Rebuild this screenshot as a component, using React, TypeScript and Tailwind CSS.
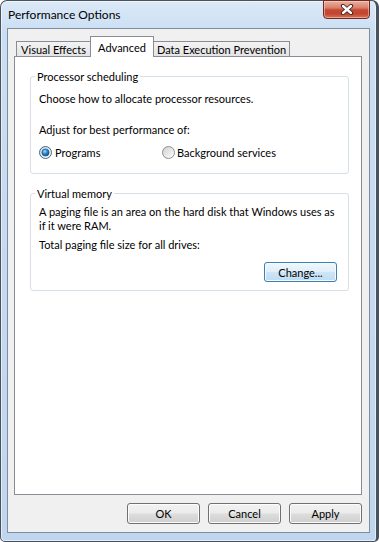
import React from "react";

function Radio({ checked }: { checked: boolean }) {
  return (
    <svg width="13" height="13" viewBox="0 0 13 13" className="shrink-0">
      <defs>
        <linearGradient id={checked ? "rgc" : "rgu"} x1="0" y1="0" x2="1" y2="1">
          <stop offset="0" stopColor="#cfcfcf" />
          <stop offset="1" stopColor="#ffffff" />
        </linearGradient>
        <radialGradient id="dot" cx="0.4" cy="0.35" r="0.7">
          <stop offset="0" stopColor="#9fd9ff" />
          <stop offset="0.45" stopColor="#2f8fd8" />
          <stop offset="1" stopColor="#0b3f73" />
        </radialGradient>
      </defs>
      <circle cx="6.5" cy="6.5" r="6" fill={`url(#${checked ? "rgc" : "rgu"})`} stroke={checked ? "#3b6c93" : "#8e8f8f"} strokeWidth="1" />
      {checked && <circle cx="6.5" cy="6.5" r="3.6" fill="url(#dot)" stroke="#1d4d78" strokeWidth="0.6" />}
    </svg>
  );
}

function Btn({ label, def }: { label: string; def?: boolean }) {
  return (
    <div
      className={
        def
          ? "w-[73px] h-[21px] flex items-center justify-center rounded-[3px] border border-[#3c7fb1] bg-[linear-gradient(to_bottom,#eef7fd_0%,#e0eff9_48%,#cde5f6_52%,#bfdcf1_100%)] shadow-[inset_0_0_0_1px_#f4fafe] text-[11px] leading-[15px] text-black"
          : "w-[73px] h-[21px] flex items-center justify-center rounded-[3px] border border-[#707070] bg-[linear-gradient(to_bottom,#f2f2f2_0%,#ebebeb_48%,#dddddd_52%,#cfcfcf_100%)] shadow-[inset_0_0_0_1px_#fcfcfc] text-[11px] leading-[15px] text-black"
      }
    >
      {label}
    </div>
  );
}

export default function App() {
  return (
    <div className="w-[379px] h-[542px] bg-white font-['Lato',sans-serif]">
      <div className="w-[379px] h-[542px] flex flex-col border-l border-t border-b border-r-[3px] border-[#4a525c] rounded-t-[7px] rounded-b-[5px] bg-[linear-gradient(to_bottom,#dbe9f7_0%,#cadef3_6%,#c0d6ef_100%)] shadow-[inset_0_0_0_1px_rgba(255,255,255,0.55)]">
        {/* Title bar */}
        <div className="h-[27px] flex justify-between">
          <div className="pl-[7px] pt-[6px] text-[12px] leading-[15px] text-black">Performance Options</div>
          <div className="mr-[6px] -mt-px w-[47px] h-[19px] flex items-center justify-center rounded-b-[4px] border border-[#6e2a20] bg-[linear-gradient(to_bottom,#eab1a3_0%,#d9806d_40%,#c44a34_52%,#c2452f_75%,#d9735a_100%)] shadow-[inset_0_0_0_1px_rgba(255,220,210,0.5)]">
            <svg width="14" height="11" viewBox="0 0 14 11">
              <path d="M3 2 L11 9 M11 2 L3 9" stroke="#3b1f1a" strokeWidth="4.2" strokeLinecap="round" />
              <path d="M3 2 L11 9 M11 2 L3 9" stroke="#ffffff" strokeWidth="2.4" strokeLinecap="round" />
            </svg>
          </div>
        </div>
        {/* Client area */}
        <div className="ml-[6px] w-[363px] h-[505px] border border-[#7f8d9c] bg-[#f0f0f0] flex flex-col text-[11px] leading-[15px] text-black">
          {/* Tabs */}
          <div className="mt-[7px] pl-[8px] h-[20px] flex items-end">
            <div className="w-[74px] h-[15px] border-l border-t border-[#898c95] bg-[linear-gradient(to_bottom,#f3f3f3,#e4e4e4)] flex items-center justify-center">
              Visual Effects
            </div>
            <div className="relative z-10 w-[64px] h-[21px] -mb-px border-l border-t border-r border-[#898c95] bg-white flex items-center justify-center">
              Advanced
            </div>
            <div className="w-[136px] h-[15px] border-t border-r border-[#898c95] bg-[linear-gradient(to_bottom,#f3f3f3,#e4e4e4)] flex items-center justify-center">
              Data Execution Prevention
            </div>
          </div>
          {/* Panel */}
          <div className="ml-[6px] w-[348px] h-[439px] border border-[#898c95] bg-white flex flex-col">
            <fieldset className="mt-[12px] ml-[15px] w-[319px] border border-[#d5dfe5] rounded-[3px] pl-[8px] pb-[13px]">
              <legend className="-ml-[4px] px-[2px] leading-[15px]">Processor scheduling</legend>
              <p className="mt-[7px]">Choose how to allocate processor resources.</p>
              <p className="mt-[16px]">Adjust for best performance of:</p>
              <div className="mt-[8px] h-[15px] flex items-center">
                <div className="w-[123px] flex items-center gap-[3px]">
                  <Radio checked />
                  <span>Programs</span>
                </div>
                <div className="flex items-center gap-[2px]">
                  <Radio checked={false} />
                  <span>Background services</span>
                </div>
              </div>
            </fieldset>
            <fieldset className="mt-[12px] ml-[15px] w-[319px] border border-[#d5dfe5] rounded-[3px] pl-[8px] pb-[8px]">
              <legend className="-ml-[4px] px-[2px] leading-[15px]">Virtual memory</legend>
              <p className="mt-[4px] leading-[14px]">
                A paging file is an area on the hard disk that Windows uses as
                <br />
                if it were RAM.
              </p>
              <p className="mt-[4px]">Total paging file size for all drives:</p>
              <div className="mt-[10px] pr-[11px] flex justify-end">
                <div className="w-[73px] h-[20px] flex items-center justify-center rounded-[3px] border border-[#3c7fb1] bg-[linear-gradient(to_bottom,#eef7fd_0%,#e0eff9_48%,#cde5f6_52%,#bfdcf1_100%)] shadow-[inset_0_0_0_1px_#f4fafe]">
                  Change...
                </div>
              </div>
            </fieldset>
          </div>
          {/* Buttons */}
          <div className="mt-[8px] pr-[7px] flex justify-end gap-[8px]">
            <Btn label="OK" />
            <Btn label="Cancel" />
            <Btn label="Apply" />
          </div>
        </div>
      </div>
    </div>
  );
}
